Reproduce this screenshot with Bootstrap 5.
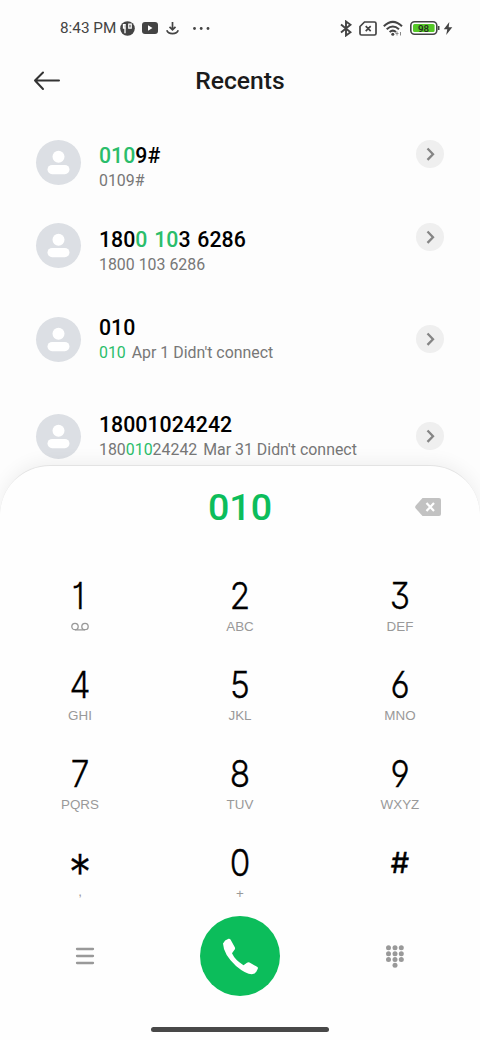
<!DOCTYPE html>
<html lang="en">
<head>
<meta charset="utf-8">
<meta name="viewport" content="width=device-width, initial-scale=1">
<title>Recents</title>
<link href="https://cdn.jsdelivr.net/npm/bootstrap@5.3.0/dist/css/bootstrap.min.css" rel="stylesheet">
<style>
body{font-family:Roboto,"Liberation Sans",sans-serif;background:#fdfdfd;color:#000;-webkit-font-smoothing:antialiased}
.phone{width:480px;height:1040px}
svg{display:block;flex:none}
.status{height:56px;padding:0 27px 0 60px;color:#444;font-size:15.3px}
.clock{width:60px;white-space:nowrap}
.topbar{height:64px;padding:0 33px 15px}
.topbar h1{font-size:24.7px;font-weight:500;color:#1b1b1b}
.calls{height:345px}
.call{height:84px;padding:0 36px}
.call.roomy{height:104px}
.avatar{width:45px;height:45px;background:#dcdfe4}
.who{margin-left:18px;padding-top:12px;line-height:25px}
.roomy .who{padding-top:2px}
.who b{font-size:21.3px;font-weight:500;word-spacing:1.5px}
.who span{font-size:15.9px;color:#777}
.who i{font-style:normal;color:#2bbd6b}
.who .when{margin-left:2px}
.more{width:28px;height:28px;background:#efefef;border:0;margin-bottom:17px}
.roomy .more{margin-bottom:0}
.sheet{height:575px;background:#fefefe;border-radius:50px 50px 0 0;border-top:1px solid #e3e3e3;box-shadow:0 -3px 18px rgba(0,0,0,.06)}
.dialed{height:85px;padding:0 39px 3px}
.dialed output{font-size:37.6px;font-weight:500;color:#0cbd5b}
.keys{margin-top:25px;height:340px}
.key{height:89px;line-height:1}
.num{height:41px;font:300 37px/39px Inter,"Open Sans",sans-serif;font-feature-settings:"cv01","cv03","cv04","cv09";-webkit-text-stroke:.3px #000;transform:scaleX(.9)}
.star{font-size:50px;line-height:61px}
.hash{font-size:29px;font-weight:400;line-height:39px;transform:none;-webkit-text-stroke:.5px #000}
.sub{height:20px;font:13.4px/19px "Liberation Sans",sans-serif;color:#999}
.actions{height:80px;padding:0 75px}
.dial{width:80px;height:80px;background:#0cbd5b}
.homebar{width:178px;height:5px;background:#484848;margin-top:31px}
</style>
</head>
<body>
<main class="phone overflow-hidden d-flex flex-column">
<div class="status d-flex align-items-center justify-content-between">
 <div class="d-flex align-items-center">
  <span class="clock">8:43 PM</span>
  <svg width="15" height="15" viewBox="0 0 15 15"><circle cx="7.5" cy="7.5" r="7.3" fill="#444"/><path d="M5 3.200v9M5.800 3.700H3.500v3.500h2.300M8.800 3.200v4h2.400v-4z" fill="none" stroke="#fff" stroke-width="1.300"/></svg>
  <svg style="margin-left:7px" width="16" height="12" viewBox="0 0 16 12"><rect width="16" height="12" rx="3" fill="#444"/><path d="M6 3.3v5.4L10.5 6z" fill="#fff"/></svg>
  <svg style="margin-left:7.500px" width="13" height="13" viewBox="0 0 13 13" fill="none" stroke="#444" stroke-width="1.7"><path d="M6.5 0v7M3.5 4.8l3 3 3-3M.8 8.3c1.5 4.5 9.9 4.5 11.4 0"/></svg>
  <svg style="margin-left:14px" width="17" height="3" viewBox="0 0 17 3" fill="#444"><circle cx="1.5" cy="1.5" r="1.400"/><circle cx="8.2" cy="1.5" r="1.400"/><circle cx="15" cy="1.5" r="1.400"/></svg>
 </div>
 <div class="d-flex align-items-center">
  <svg width="12" height="17" viewBox="0 0 12 17" fill="none" stroke="#444" stroke-width="1.900"><path d="M1 4.500l9.500 7.700L6 15.500V1.500l4.500 3.300L1 12.500"/></svg>
  <svg style="margin-left:7px" width="18" height="15" viewBox="0 0 18 15" fill="none" stroke="#444" stroke-width="1.700"><path d="M5.500 1H15.500q1.500 0 1.500 1.500V12.500q0 1.500-1.500 1.500H2.500Q1 14 1 12.500V5.500zM6.700 5.200l5 5M11.700 5.200l-5 5"/></svg>
  <svg style="margin-left:6px" width="20" height="17" viewBox="0 0 20 17" fill="none" stroke="#444" stroke-width="2"><path d="M.8 6.200Q9.800-2.500 19 6.200M3.700 9.300q6.100-5.500 12.300 0M6.600 12q3.300-2.700 6.400 0"/><circle cx="9.800" cy="14.300" r="1.500" fill="#444" stroke="none"/><path d="M14 11.500v4M12.500 13.500h3M17.500 15.500v-3.500" stroke="#888" stroke-width="1"/></svg>
  <svg style="margin-left:7px" width="30" height="14" viewBox="0 0 30 14"><rect x=".8" y=".8" width="26" height="12.400" rx="3.800" fill="#fff" stroke="#444" stroke-width="1.600"/><rect x="3" y="3" width="21.600" height="8" rx="1.500" fill="#55c827"/><path d="M28.700 5v4" stroke="#444" stroke-width="1.600"/><text x="13.600" y="10.500" text-anchor="middle" font-family="Roboto,sans-serif" font-weight="500" font-size="9.800" fill="#222">98</text></svg>
  <svg style="margin-left:3px" width="10" height="13" viewBox="0 0 10 13"><path d="M6.300 0L.8 7.300h3.500L3.200 13 9.300 5.300H5.700z" fill="#444"/></svg>
 </div>
</div>
<header class="topbar d-flex align-items-center">
 <svg width="27" height="20" viewBox="0 0 27 20" fill="none" stroke="#333" stroke-width="2" stroke-linecap="round" stroke-linejoin="round"><path d="M26 9.500H2M10 1.500L2 9.500l8 8.500"/></svg>
 <h1 class="mb-0 flex-fill text-center" style="margin-right:27px">Recents</h1>
</header>
<section class="calls overflow-hidden">
 <article class="call d-flex align-items-center">
  <div class="avatar rounded-circle"><svg width="45" height="45" fill="#fff"><circle cx="22.500" cy="16.800" r="6"/><rect x="11.500" y="25" width="22" height="9.200" rx="4.600"/></svg></div>
  <div class="who d-flex flex-column flex-fill"><b><i>010</i>9#</b><span>0109#</span></div>
  <button class="more rounded-circle p-0" aria-label="Details"><svg width="28" height="28" fill="none" stroke="#858585" stroke-width="2.300"><path d="M11.500 8.500l5.500 5.700-5.500 5.700"/></svg></button>
 </article>
 <article class="call d-flex align-items-center" style="height:83px">
  <div class="avatar rounded-circle"><svg width="45" height="45" fill="#fff"><circle cx="22.500" cy="16.800" r="6"/><rect x="11.500" y="25" width="22" height="9.200" rx="4.600"/></svg></div>
  <div class="who d-flex flex-column flex-fill"><b>180<i>0 10</i>3 6286</b><span>1800 103 6286</span></div>
  <button class="more rounded-circle p-0" aria-label="Details"><svg width="28" height="28" fill="none" stroke="#858585" stroke-width="2.300"><path d="M11.500 8.500l5.500 5.700-5.500 5.700"/></svg></button>
 </article>
 <article class="call roomy d-flex align-items-center">
  <div class="avatar rounded-circle"><svg width="45" height="45" fill="#fff"><circle cx="22.500" cy="16.800" r="6"/><rect x="11.500" y="25" width="22" height="9.200" rx="4.600"/></svg></div>
  <div class="who d-flex flex-column flex-fill"><b>010</b><span><i>010</i><span class="when"> Apr 1 Didn't connect</span></span></div>
  <button class="more rounded-circle p-0" aria-label="Details"><svg width="28" height="28" fill="none" stroke="#858585" stroke-width="2.300"><path d="M11.500 8.500l5.500 5.700-5.500 5.700"/></svg></button>
 </article>
 <article class="call roomy d-flex align-items-center" style="height:90px">
  <div class="avatar rounded-circle"><svg width="45" height="45" fill="#fff"><circle cx="22.500" cy="16.800" r="6"/><rect x="11.500" y="25" width="22" height="9.200" rx="4.600"/></svg></div>
  <div class="who d-flex flex-column flex-fill"><b>18001024242</b><span>180<i>010</i>24242<span class="when"> Mar 31 Didn't connect</span></span></div>
  <button class="more rounded-circle p-0" aria-label="Details"><svg width="28" height="28" fill="none" stroke="#858585" stroke-width="2.300"><path d="M11.500 8.500l5.500 5.700-5.500 5.700"/></svg></button>
 </article>
</section>
<section class="sheet position-relative">
 <div class="dialed d-flex align-items-center">
  <output class="flex-fill text-center" style="margin-left:26px">010</output>
  <svg width="26" height="18" viewBox="0 0 26 18"><path d="M7.500 0H24q2 0 2 2v14q0 2-2 2H7.500L.6 10.300Q-.4 9 .6 7.700z" fill="#c2c2c2"/><path d="M11.500 5l7.500 8M19 5l-7.500 8" stroke="#fff" stroke-width="2.200"/></svg>
 </div>
 <div class="keys row g-0 text-center">
  <div class="key col-4"><div class="num pe-1">1</div><div class="sub"><svg class="mx-auto" width="20" height="19" fill="none" stroke="#999" stroke-width="1.300"><circle cx="5" cy="9.500" r="3.200"/><circle cx="15" cy="9.500" r="3.200"/><path d="M5 12.900h10"/></svg></div></div>
  <div class="key col-4"><div class="num">2</div><div class="sub">ABC</div></div>
  <div class="key col-4"><div class="num">3</div><div class="sub">DEF</div></div>
  <div class="key col-4"><div class="num">4</div><div class="sub">GHI</div></div>
  <div class="key col-4"><div class="num">5</div><div class="sub">JKL</div></div>
  <div class="key col-4"><div class="num">6</div><div class="sub">MNO</div></div>
  <div class="key col-4"><div class="num">7</div><div class="sub">PQRS</div></div>
  <div class="key col-4"><div class="num">8</div><div class="sub">TUV</div></div>
  <div class="key col-4"><div class="num">9</div><div class="sub">WXYZ</div></div>
  <div class="key col-4"><div class="num star">*</div><div class="sub" style="line-height:15px">,</div></div>
  <div class="key col-4"><div class="num">0</div><div class="sub">+</div></div>
  <div class="key col-4"><div class="num hash">#</div></div>
 </div>
 <div class="actions d-flex align-items-center justify-content-between">
  <svg width="20" height="18" fill="none" stroke="#999" stroke-width="2.300" stroke-linecap="round"><path d="M2 2h16M2 9h16M2 16h16"/></svg>
  <button class="dial btn rounded-circle p-0 border-0" aria-label="Call"><svg width="80" height="80" viewBox="0 0 80 80"><path d="M23 27.500Q24.500 24 28.500 22.800q1.300-.3 2 .8l4.300 7.700q.7 1.400-.3 2.500l-2.500 3.500q3 6.800 11.500 11.900l3.500-2.400q1.200-1 2.500-.3l7.500 4.300q1.300 .7 .8 2-1.500 4.500-5 5.300-6 .8-16.800-8.200Q23.500 38.500 23 27.500z" fill="#fff"/></svg></button>
  <svg width="20" height="23" fill="#999"><circle cx="3.500" cy="2.700" r="2.500"/><circle cx="10" cy="2.700" r="2.500"/><circle cx="16.300" cy="2.700" r="2.500"/><circle cx="3.500" cy="8.700" r="2.500"/><circle cx="10" cy="8.700" r="2.500"/><circle cx="16.300" cy="8.700" r="2.500"/><circle cx="3.500" cy="14.500" r="2.500"/><circle cx="10" cy="14.500" r="2.500"/><circle cx="16.300" cy="14.500" r="2.500"/><circle cx="10" cy="20.300" r="2.500"/></svg>
 </div>
 <div class="homebar rounded-pill mx-auto"></div>
</section>
</main>
<script src="https://cdn.jsdelivr.net/npm/bootstrap@5.3.0/dist/js/bootstrap.bundle.min.js"></script>
</body>
</html>
